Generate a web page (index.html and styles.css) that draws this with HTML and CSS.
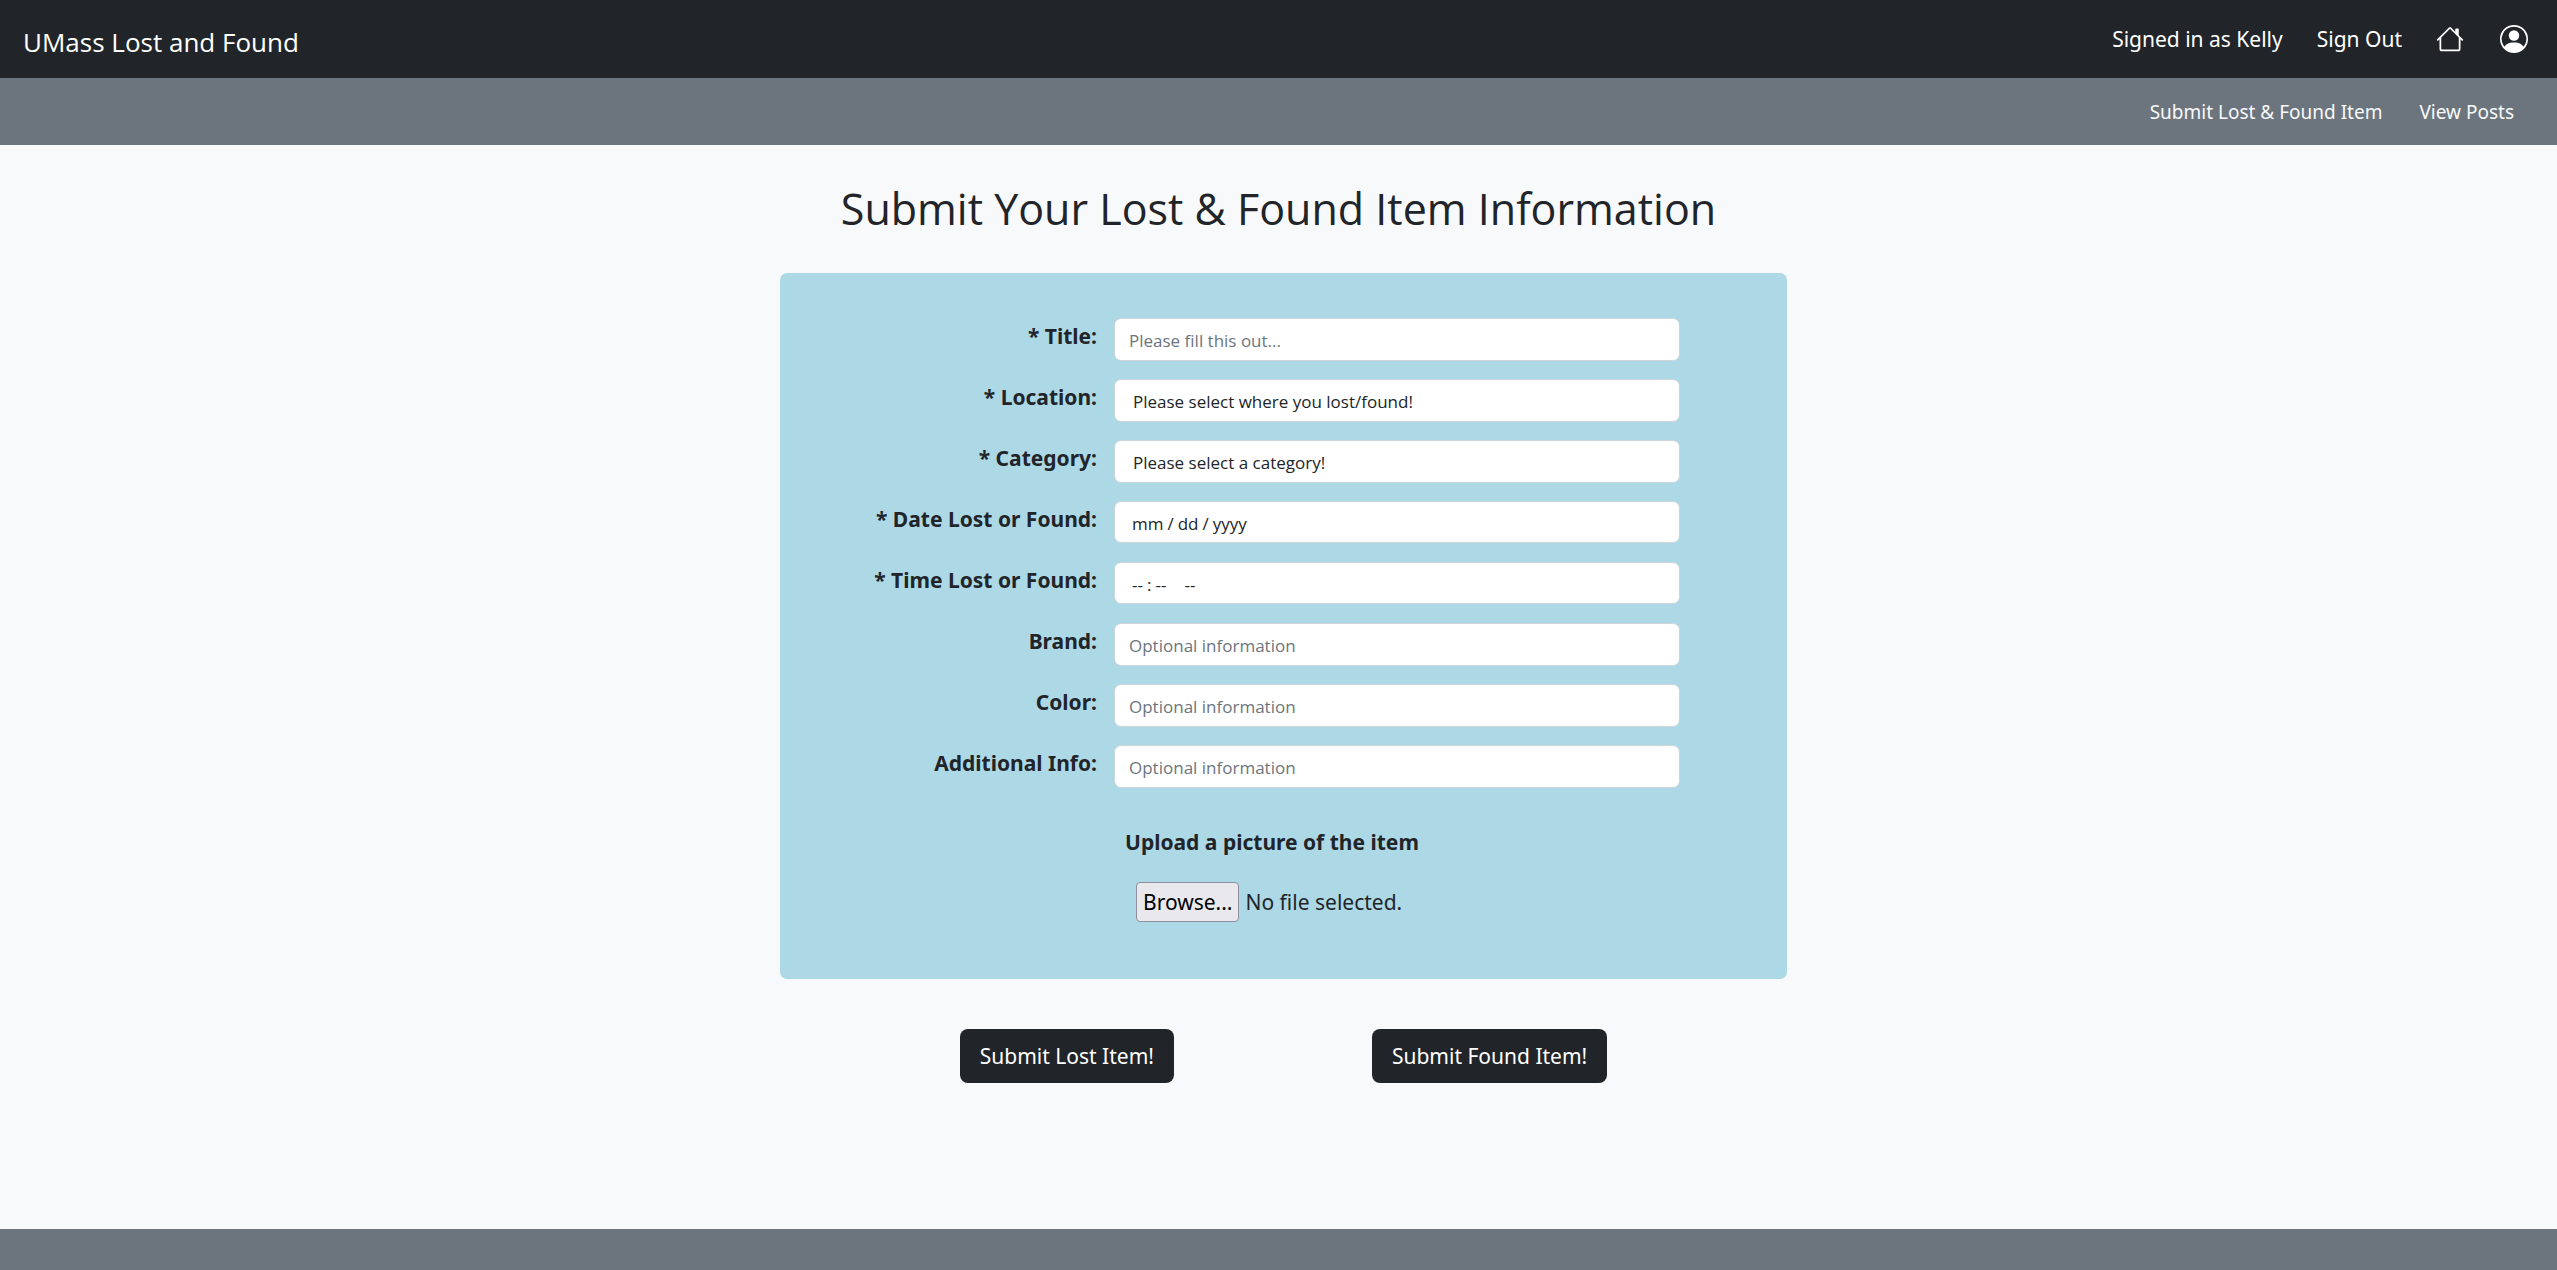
FILE: index.html
```html
<!DOCTYPE html>
<html lang="en">
<head>
<meta charset="utf-8">
<meta name="viewport" content="width=device-width, initial-scale=1">
<title>UMass Lost and Found</title>
<link rel="stylesheet" href="styles.css">
</head>
<body>
<header>
  <nav class="topbar" aria-label="Main">
    <a class="brand" href="#">UMass Lost and Found</a>
    <div class="account">
      <span>Signed in as Kelly</span>
      <a href="#">Sign Out</a>
      <a class="icon-link" href="#" aria-label="Home">
        <svg class="icon" viewBox="0 0 16 16" fill="currentColor"><path d="M8.707 1.5a1 1 0 0 0-1.414 0L.646 8.146a.5.5 0 0 0 .708.708L2 8.207V13.5A1.5 1.5 0 0 0 3.5 15h9a1.5 1.5 0 0 0 1.5-1.5V8.207l.646.647a.5.5 0 0 0 .708-.708L13 5.793V2.5a.5.5 0 0 0-.5-.5h-1a.5.5 0 0 0-.5.5v1.293L8.707 1.5ZM13 7.207V13.5a.5.5 0 0 1-.5.5h-9a.5.5 0 0 1-.5-.5V7.207l5-5 5 5Z"/></svg>
      </a>
      <a class="icon-link" href="#" aria-label="Profile">
        <svg class="icon" viewBox="0 0 16 16" fill="currentColor"><path d="M11 6a3 3 0 1 1-6 0 3 3 0 0 1 6 0z"/><path fill-rule="evenodd" d="M0 8a8 8 0 1 1 16 0A8 8 0 0 1 0 8zm8-7a7 7 0 0 0-5.468 11.37C3.242 11.226 4.805 10 8 10s4.757 1.225 5.468 2.37A7 7 0 0 0 8 1z"/></svg>
      </a>
    </div>
  </nav>
  <nav class="subbar" aria-label="Posts">
    <a href="#">Submit Lost &amp; Found Item</a>
    <a href="#">View Posts</a>
  </nav>
</header>
<main>
  <h1>Submit Your Lost &amp; Found Item Information</h1>
  <form class="item-form">
    <div class="card">
      <div class="fields">
        <label for="title">* Title:</label>
        <input class="control" id="title" type="text" placeholder="Please fill this out...">
        <label for="location">* Location:</label>
        <select class="control" id="location"><option>Please select where you lost/found!</option></select>
        <label for="category">* Category:</label>
        <select class="control" id="category"><option>Please select a category!</option></select>
        <label for="date">* Date Lost or Found:</label>
        <input class="control" id="date" type="date">
        <label for="time">* Time Lost or Found:</label>
        <input class="control" id="time" type="time">
        <label for="brand">Brand:</label>
        <input class="control" id="brand" type="text" placeholder="Optional information">
        <label for="color">Color:</label>
        <input class="control" id="color" type="text" placeholder="Optional information">
        <label for="info">Additional Info:</label>
        <input class="control" id="info" type="text" placeholder="Optional information">
      </div>
      <div class="upload">
        <label class="upload-title" for="picture">Upload a picture of the item</label>
        <div class="picker">
          <input class="file-input" id="picture" type="file">
          <label class="browse" for="picture">Browse...</label>
          <span>No file selected.</span>
        </div>
      </div>
    </div>
    <div class="actions">
      <button class="btn" type="button">Submit Lost Item!</button>
      <button class="btn" type="button">Submit Found Item!</button>
    </div>
  </form>
</main>
<footer class="footer"></footer>
</body>
</html>
```
FILE: styles.css
```css
* { box-sizing: border-box; }

body {
  display: flex;
  flex-direction: column;
  min-height: 100vh;
  margin: 0;
  background: #f8f9fa;
  color: #212529;
  font-family: "Segoe UI", "Noto Sans", sans-serif;
  font-size: 21px;
  line-height: 32px;
}

a { color: inherit; text-decoration: none; }

.brand, h1, .control { font-family: "Segoe UI", "Open Sans", sans-serif; }

.topbar {
  display: flex;
  align-items: center;
  justify-content: space-between;
  height: 78px;
  padding: 0 29px 0 23px;
  background: #212529;
  color: #fff;
}

.brand { padding-top: 6px; font-size: 26px; }

.account { display: flex; align-items: center; gap: 34px; }

.icon-link { display: flex; }
.icon-link + .icon-link { margin-left: 2px; }

.icon { width: 28px; height: 28px; }

.subbar {
  display: flex;
  align-items: center;
  justify-content: flex-end;
  gap: 37px;
  height: 67px;
  padding-right: 43px;
  background: #6c757d;
  color: #f8f9fa;
  font-size: 19px;
}

main { flex: 1; }

h1 {
  margin: 0;
  padding: 36px 0 36px;
  font-size: 43px;
  font-weight: 400;
  line-height: 56px;
  text-align: center;
}

.item-form {
  max-width: 1017px;
  margin: 0 auto;
  padding-left: 10px;
}

.card {
  padding: 45px 107px 57px 80px;
  border-radius: 7px;
  background: #add8e6;
}

.fields {
  display: grid;
  grid-template-columns: 1fr 566px;
  column-gap: 17px;
  row-gap: 18px;
}

.fields label {
  padding: 2px 0 9px;
  font-weight: 700;
  text-align: right;
}

.control {
  width: 100%;
  height: 43px;
  padding: 2px 14px 0;
  border: 1px solid #ced4da;
  border-radius: 7px;
  background: #fff;
  color: #212529;
  font-size: 17px;
  appearance: none;
}

select.control { padding-left: 18px; }
input[type="date"], input[type="time"] { height: 42px; padding-left: 16px; }

.control::placeholder { color: #6c757d; opacity: 1; }
.control::-webkit-calendar-picker-indicator { display: none; }
.control::-webkit-datetime-edit-text { padding: 0 3px; }
input[type="time"]::-webkit-datetime-edit-ampm-field { margin-left: 8px; }

.upload { padding: 38px 0 0 265px; }

.upload-title { display: block; font-weight: 700; }

.picker {
  display: flex;
  align-items: center;
  gap: 6px;
  padding: 24px 0 0 11px;
}

.file-input {
  position: absolute;
  width: 1px;
  height: 1px;
  opacity: 0;
}

.browse {
  padding: 3px 6px;
  border: 1px solid #8f8f9d;
  border-radius: 4px;
  background: #e9e9ed;
  color: #000;
}

.actions {
  display: flex;
  justify-content: center;
  gap: 198px;
  padding: 50px 0;
}

.btn {
  height: 54px;
  padding: 0 20px;
  border: 0;
  border-radius: 8px;
  background: #212529;
  color: #fff;
  font: inherit;
}

.footer { height: 41px; background: #6c757d; }
```
